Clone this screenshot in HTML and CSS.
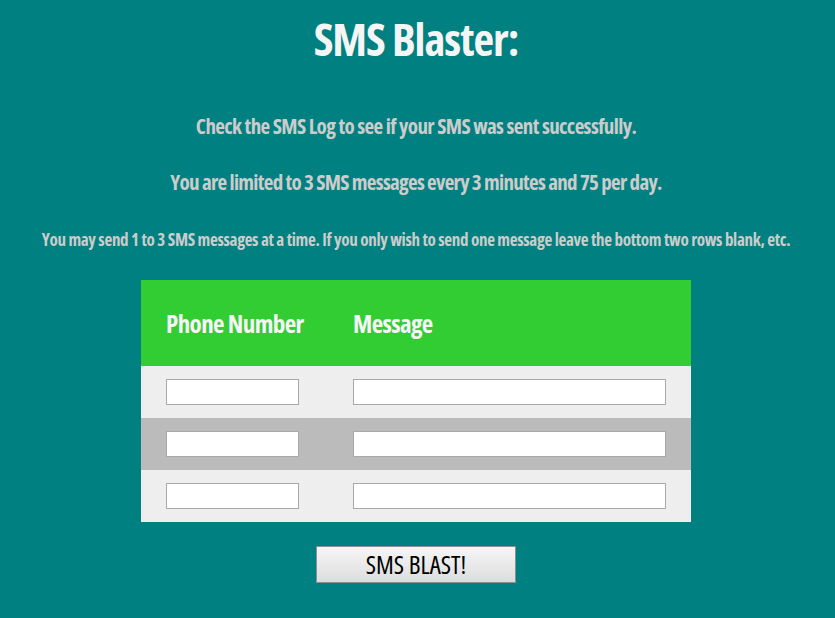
FILE: index.html
```html
<!DOCTYPE html>
<html>
<head>
<meta charset="utf-8">
<link rel="stylesheet" href="styles.css">
</head>
<body>
<main class="page">
  <h1 class="title">SMS Blaster:</h1>
  <p class="note note-a">Check the SMS Log to see if your SMS was sent successfully.</p>
  <p class="note note-b">You are limited to 3 SMS messages every 3 minutes and 75 per day.</p>
  <p class="note note-c">You may send 1 to 3 SMS messages at a time. If you only wish to send one message leave the bottom two rows blank, etc.</p>
  <div class="sms-table">
    <div class="cell head">Phone Number</div>
    <div class="cell head">Message</div>
    <div class="cell row-light"><input class="field phone" type="text"></div>
    <div class="cell row-light"><input class="field msg" type="text"></div>
    <div class="cell row-dark"><input class="field phone" type="text"></div>
    <div class="cell row-dark"><input class="field msg" type="text"></div>
    <div class="cell row-light"><input class="field phone" type="text"></div>
    <div class="cell row-light"><input class="field msg" type="text"></div>
  </div>
  <div class="actions"><button class="blast" type="button">SMS BLAST!</button></div>
</main>
</body>
</html>
```
FILE: styles.css
```css
html, body {
  margin: 0;
  padding: 0;
  background: #008080;
}
.page {
  display: flex;
  flex-direction: column;
  align-items: center;
  padding-right: 3px;
  font-family: "Open Sans", "Roboto", sans-serif;
  font-stretch: 75%;
  font-weight: bold;
}
.title {
  margin: 14px 0 0;
  height: 50px;
  line-height: 50px;
  font-size: 45px;
  letter-spacing: -1px;
  font-weight: bold;
  color: #f5f5f5;
}
.note {
  margin: 0;
  color: #cccccc;
  text-align: center;
  white-space: nowrap;
}
.note-a {
  margin-top: 49px;
  font-size: 21px;
  line-height: 26px;
  letter-spacing: -0.6px;
}
.note-b {
  margin-top: 30px;
  font-size: 21px;
  line-height: 26px;
  letter-spacing: -0.7px;
}
.note-c {
  margin-top: 34px;
  font-size: 17px;
  line-height: 22px;
  letter-spacing: -0.3px;
}
.sms-table {
  margin-top: 29px;
  display: grid;
  grid-template-columns: 187px 363px;
  grid-template-rows: 86px 52px 52px 52px;
}
.cell {
  display: flex;
  align-items: center;
  padding: 0 25px;
}
.head {
  background: #32cd32;
  color: #f5f5f5;
  font-size: 25px;
  letter-spacing: -0.6px;
  white-space: nowrap;
}
.row-light { background: #eeeeee; }
.row-dark { background: #bbbbbb; }
.field {
  box-sizing: border-box;
  height: 26px;
  margin: 0;
  border: 1px solid #a9a9a9;
  background: #fff;
  padding: 2px 4px;
}
.phone { width: 133px; }
.msg { width: 313px; }
.actions {
  margin-top: 24px;
}
.blast {
  width: 200px;
  height: 37px;
  border: 1px solid #8f8f8f;
  background: linear-gradient(#f6f6f6, #dddddd);
  font-family: "Open Sans", "Roboto", sans-serif;
  font-stretch: 75%;
  font-weight: normal;
  font-size: 25px;
  line-height: 1;
  color: #000;
  padding: 0;
}
```
